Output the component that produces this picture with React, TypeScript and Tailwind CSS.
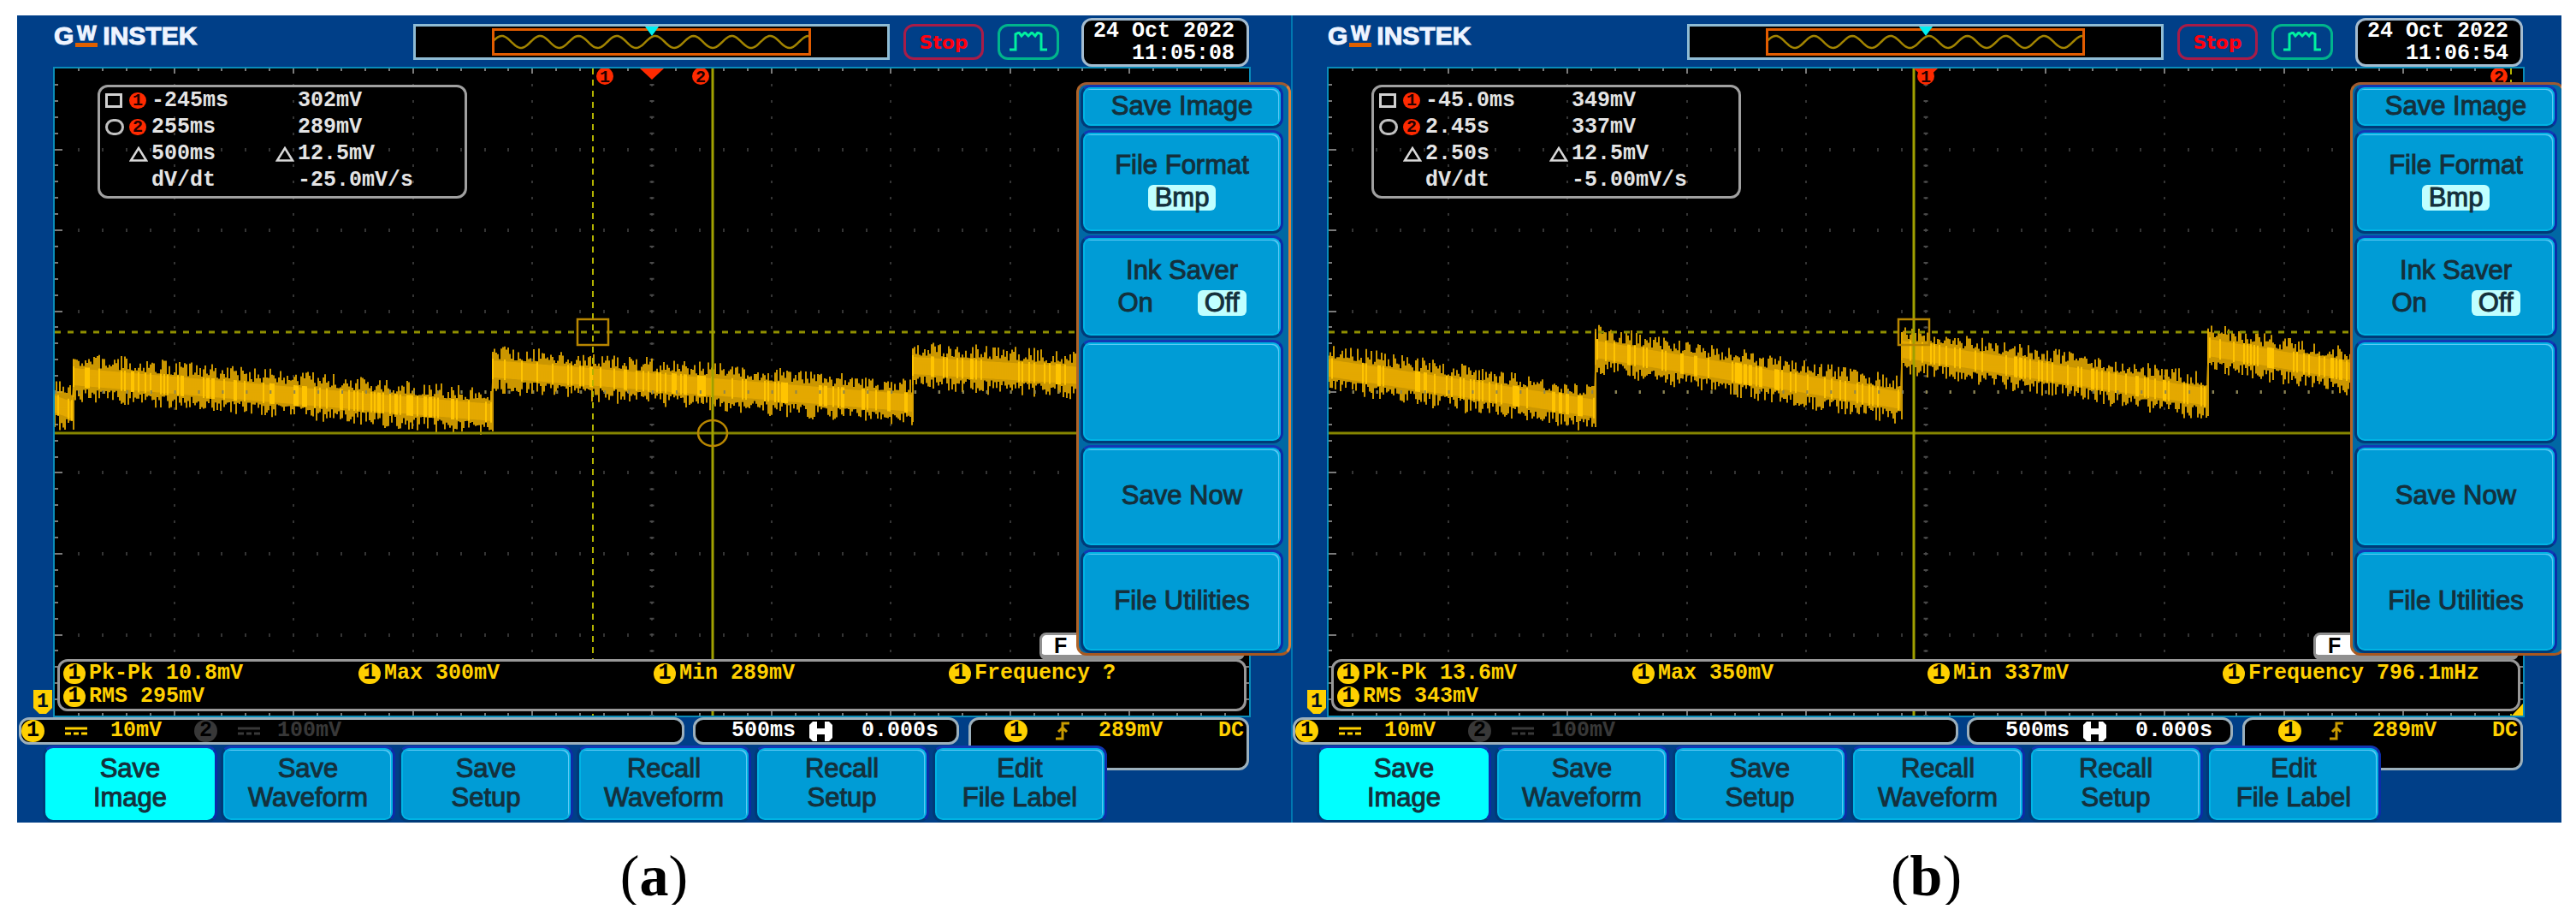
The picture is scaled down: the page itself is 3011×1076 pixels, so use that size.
import React from 'react';
import clsx from 'clsx';

interface Point {
  x: number;
  y: number;
}

interface Cursor {
  x: number;
  dashed: boolean;
}

interface Capture {
  label: string;
  time: string;
  cursorRows: [string, string][];
  slope: [string, string];
  measurements: string[];
  segments: [Point, Point][];
  cursors: [Cursor, Cursor];
  badges: [number, number];
  showCircle: boolean;
  seed: number;
}

const WIDTH = 1396;
const HEIGHT = 756;
const LEVEL_1 = 308;
const LEVEL_2 = 426;

const captures: Capture[] = [
  {
    label: 'a',
    time: '11:05:08',
    cursorRows: [
      ['-245ms', '302mV'],
      ['255ms', '289mV'],
      ['500ms', '12.5mV'],
    ],
    slope: ['dV/dt', '-25.0mV/s'],
    measurements: ['Pk-Pk 10.8mV', 'Max 300mV', 'Min 289mV', 'Frequency ?', 'RMS 295mV'],
    segments: [
      [{ x: 0, y: 392 }, { x: 22, y: 400 }],
      [{ x: 22, y: 360 }, { x: 512, y: 402 }],
      [{ x: 512, y: 351 }, { x: 1003, y: 391 }],
      [{ x: 1003, y: 347 }, { x: 1220, y: 360 }],
    ],
    cursors: [{ x: 629, dashed: true }, { x: 769, dashed: false }],
    badges: [643, 755],
    showCircle: true,
    seed: 7,
  },
  {
    label: 'b',
    time: '11:06:54',
    cursorRows: [
      ['-45.0ms', '349mV'],
      ['2.45s', '337mV'],
      ['2.50s', '12.5mV'],
    ],
    slope: ['dV/dt', '-5.00mV/s'],
    measurements: ['Pk-Pk 13.6mV', 'Max 350mV', 'Min 337mV', 'Frequency 796.1mHz', 'RMS 343mV'],
    segments: [
      [{ x: 0, y: 350 }, { x: 312, y: 397 }],
      [{ x: 312, y: 328 }, { x: 670, y: 388 }],
      [{ x: 670, y: 328 }, { x: 1028, y: 384 }],
      [{ x: 1028, y: 326 }, { x: 1220, y: 358 }],
    ],
    cursors: [{ x: 684, dashed: false }, { x: 1382, dashed: true }],
    badges: [698, 1368],
    showCircle: false,
    seed: 23,
  },
];

const tabs = [
  ['Save', 'Image'],
  ['Save', 'Waveform'],
  ['Save', 'Setup'],
  ['Recall', 'Waveform'],
  ['Recall', 'Setup'],
  ['Edit', 'File Label'],
];

const mono = "font-['Liberation_Mono',monospace] text-[25px] font-bold whitespace-pre";
const softKey =
  'rounded-xl border-[3px] border-t-[#1238b4] border-r-[#0c2ca8] border-b-[#003a78] border-l-[#003a78] bg-[#009cd6] pb-[2px] shadow-[inset_0_0_0_2px_#00b4e4,inset_-2px_2px_0_1px_#5cc8f4] text-[31px] leading-[34px] text-[#14303c] [-webkit-text-stroke:1px_#14303c]';

// small LCG so the noise is the same on every render
const createRandom = (seed: number) => {
  let state = seed;
  return () => {
    state = (state * 1664525 + 1013904223) % 4294967296;
    return state / 4294967296;
  };
};

const buildTrace = (segments: [Point, Point][], seed: number) => {
  const random = createRandom(seed);
  const top: string[] = [];
  const bottom: string[] = [];
  let spikes = '';
  let gaps = '';
  let edges = '';
  segments.forEach(([from, to], index) => {
    for (let x = from.x; x < to.x; x += 2) {
      const t = (x - from.x) / (to.x - from.x);
      const y = from.y + (to.y - from.y) * t;
      const up = y - 12 - Math.pow(random(), 1.4) * 17;
      const down = y + 12 + Math.pow(random(), 1.4) * 17;
      spikes += `M${x} ${up.toFixed(1)}V${down.toFixed(1)}`;
      if (random() < 0.25) {
        gaps += `M${x} ${(y - 12).toFixed(1)}V${(y + 12).toFixed(1)}`;
      }
      top.push(`${x} ${(y - 10).toFixed(1)}`);
      bottom.unshift(`${x} ${(y + 10).toFixed(1)}`);
    }
    if (index > 0) {
      edges += `M${from.x} ${from.y - 20}V${segments[index - 1][1].y + 22}`;
    }
  });
  return { spikes, gaps, edges, band: `M${top.join('L')}L${bottom.join('L')}Z` };
};

const buildGrid = () => {
  let dots = '';
  let ticks = '';
  const dx = WIDTH / 50;
  const dy = HEIGHT / 40;
  for (let i = 1; i < 50; i++) {
    const x = Math.round(i * dx);
    for (let row = 1; row < 8; row++) {
      dots += `M${x} ${Math.round(row * 5 * dy) - 2}v4`;
    }
    const length = i % 5 === 0 ? 6 : 3;
    ticks += `M${x} 0v${length}M${x} ${HEIGHT}v-${length}`;
  }
  for (let j = 1; j < 40; j++) {
    const y = Math.round(j * dy);
    for (let col = 1; col < 10; col++) {
      dots += `M${Math.round(col * 5 * dx)} ${y - 1}v3`;
    }
    const length = j % 5 === 0 ? 9 : 4;
    ticks += `M0 ${y}h${length}M${WIDTH} ${y}h-${length}`;
  }
  return { dots, ticks };
};

const grid = buildGrid();

const Badge: React.FC<{ value: string; className: string }> = ({ value, className }) => (
  <span className={clsx('inline-flex shrink-0 items-center justify-center rounded-full', className)}>{value}</span>
);

const Display: React.FC<{ capture: Capture }> = ({ capture }) => {
  const trace = buildTrace(capture.segments, capture.seed);
  const [first, second] = capture.cursors;
  return (
    <svg viewBox={`0 0 ${WIDTH} ${HEIGHT}`} preserveAspectRatio="none" className="absolute inset-0 h-full w-full">
      <path d={grid.dots} stroke="#343434" strokeWidth="2" />
      <path d={grid.ticks} stroke="#7a7a7a" strokeWidth="2" />
      <path d="M698 18V756" stroke="#4a4a4a" strokeWidth="5" strokeDasharray="2 16.9" />
      <path d={trace.band} fill="#eeb000" />
      <path d={trace.edges} stroke="#c89400" strokeWidth="2" />
      <path d={trace.spikes} stroke="#e2a800" strokeWidth="1.8" />
      <path d={trace.gaps} stroke="#ffc400" strokeWidth="2" />
      <path d="M0 378H1396" stroke="#8c8450" strokeWidth="4" strokeDasharray="2 25.92" />
      <path d={`M0 ${LEVEL_1}H${WIDTH}`} stroke="#8f8f00" strokeWidth="3" strokeDasharray="7 8" />
      <path d={`M0 ${LEVEL_2}H${WIDTH}`} stroke="#858500" strokeWidth="3" />
      {[first, second].map((cursor) => (
        <path
          key={cursor.x}
          d={`M${cursor.x} 0V${HEIGHT}`}
          stroke={cursor.dashed ? '#b4b400' : '#a0a000'}
          strokeWidth={cursor.dashed ? 2 : 3}
          strokeDasharray={cursor.dashed ? '7 6' : undefined}
        />
      ))}
      <rect x={first.x - 18} y={LEVEL_1 - 15} width="36" height="30" fill="none" stroke="#b88600" strokeWidth="2.5" />
      {capture.showCircle && (
        <ellipse cx={second.x} cy={LEVEL_2} rx="17" ry="15" fill="none" stroke="#b88600" strokeWidth="2.5" />
      )}
      <path d="M684 0H712L698 13Z" fill="#ff2a00" />
      {capture.badges.map((x, index) => (
        <g key={x}>
          <ellipse cx={x} cy="9" rx="10" ry="10" fill="#ff2a00" />
          <text
            x={x}
            y="16"
            textAnchor="middle"
            fontFamily="Liberation Mono, monospace"
            fontWeight="bold"
            fontSize="20"
            fill="#200"
          >
            {index + 1}
          </text>
        </g>
      ))}
      {!capture.showCircle && <path d="M1396 742V756H1383Z" fill="#ffd000" />}
    </svg>
  );
};

const Overview: React.FC = () => {
  let wave = 'M0 14';
  for (let x = 0; x <= 366; x += 2) {
    wave += `L${x} ${(17 + 7 * Math.sin(((x + 25) / 44.7) * Math.PI * 2)).toFixed(1)}`;
  }
  return (
    <div className="relative h-[42px] w-[557px] border-[3px] border-[#8fbcd4] bg-black px-[89px] py-[2px]">
      <div className="h-full border-[3px] border-[#e25c00]">
        <svg viewBox="0 0 366 26" preserveAspectRatio="none" className="h-full w-full">
          <path d={wave} transform="translate(0 -4)" fill="none" stroke="#a28400" strokeWidth="2.5" />
        </svg>
      </div>
      <svg viewBox="0 0 16 11" className="absolute top-0 left-[268px] w-4">
        <path d="M0 0H16L8 11Z" fill="#00f0f0" />
      </svg>
    </div>
  );
};

const Header: React.FC<{ time: string }> = ({ time }) => (
  <header className="flex h-[60px] items-start pt-[3px] pr-[49px] pl-[43px]">
    <div className="mt-[5px] flex flex-1 items-start gap-[2px] text-[30px] leading-[32px] font-bold text-[#eef4ff] [-webkit-text-stroke:1px_#eef4ff]">
      <span>G</span>
      <span className="mt-[3px] flex w-[26px] flex-col items-center border-b-[5px] border-[#e06000] pb-[2px] text-[24px] leading-[19px]">
        W
      </span>
      <span className="ml-1">INSTEK</span>
    </div>
    <div className="mt-[7px] flex items-start">
      <Overview />
      <div className="ml-4 flex h-[42px] w-[94px] items-center justify-center rounded-xl border-[3px] border-[#a81c48] font-['DejaVu_Sans',sans-serif] text-[22px] font-bold text-[#ff0010]">
        Stop
      </div>
      <div className="ml-4 flex h-[42px] w-[72px] items-center justify-center rounded-xl border-[3px] border-[#00b48c]">
        <svg viewBox="0 0 44 24" className="h-6 w-11" fill="none" stroke="#00f0a0" strokeWidth="3">
          <path d="M0 21H7V3L11 1L14 5L18 1L22 5L26 1L30 5L33 1L37 3V21H44" />
        </svg>
      </div>
    </div>
    <div
      className={clsx(
        mono,
        'ml-[26px] h-[57px] w-[196px] rounded-xl border-[3px] border-[#a4bcd0] bg-black pr-[14px] text-right leading-[26px] text-white'
      )}
    >
      <div>24 Oct 2022</div>
      <div>{time}</div>
    </div>
  </header>
);

const Triangle: React.FC = () => (
  <svg viewBox="0 0 22 18" className="h-[18px] w-[22px]" fill="none" stroke="#d8d8d8" strokeWidth="2.5">
    <path d="M2 16.500L11 2L20 16.500Z" />
  </svg>
);

const CursorBox: React.FC<{ capture: Capture }> = ({ capture }) => {
  const redBadge = 'h-[19px] w-5 bg-[#ff2a00] text-[20px] leading-[19px] text-[#200]';
  const markers = [
    <span className="h-[17px] w-5 border-[3px] border-[#d0d0d0]" />,
    <span className="h-[19px] w-[22px] rounded-full border-[3px] border-[#c0c0c0]" />,
    null,
  ];
  return (
    <div
      className={clsx(
        mono,
        'relative mt-[19px] ml-[50px] w-[432px] rounded-xl border-[3px] border-[#a0a0a0] pb-[3px] pl-[6px] leading-[31px] text-[#e4e4e4]'
      )}
    >
      {capture.cursorRows.map(([time, volts], index) => (
        <div key={index} className="grid grid-cols-[28px_26px_145px_26px_auto] items-center">
          <span className="flex">{markers[index]}</span>
          {index < 2 ? <Badge value={String(index + 1)} className={redBadge} /> : <Triangle />}
          <span>{time}</span>
          <span>{index === 2 && <Triangle />}</span>
          <span>{volts}</span>
        </div>
      ))}
      <div className="grid grid-cols-[171px_auto] pl-[54px]">
        <span>{capture.slope[0]}</span>
        <span>{capture.slope[1]}</span>
      </div>
    </div>
  );
};

const Measurements: React.FC<{ items: string[] }> = ({ items }) => (
  <div
    className={clsx(
      mono,
      'relative mx-[3px] mt-auto mb-[5px] grid grid-cols-4 rounded-xl border-[3px] border-[#989898] bg-black pb-px pl-1 leading-[27px] text-[#ffd000]'
    )}
  >
    {items.map((item) => (
      <div key={item} className="flex items-center gap-1">
        <Badge value="1" className="h-6 w-[26px] bg-[#ffd000] leading-6 text-black" />
        <span>{item}</span>
      </div>
    ))}
  </div>
);

const SideMenu: React.FC = () => {
  const pill = 'rounded-md bg-[#c0ffff] px-2 leading-[30px]';
  return (
    <nav className="absolute top-[18px] right-0 flex h-[670px] w-[251px] flex-col gap-[2px] rounded-xl border-[3px] border-t-[#a05a30] border-r-[#e08038] border-b-[#a85820] border-l-[#b06428] bg-[#0068a4] pr-[6px] pl-[2px]">
      <h2 className={clsx(softKey, 'flex h-[51px] shrink-0 items-center justify-center')}>Save Image</h2>
      <button className={clsx(softKey, 'flex flex-1 flex-col items-center justify-center gap-[6px]')}>
        <span>File Format</span>
        <span className={pill}>Bmp</span>
      </button>
      <button className={clsx(softKey, 'flex flex-1 flex-col items-center justify-center gap-[6px]')}>
        <span>Ink Saver</span>
        <span className="flex w-[150px] justify-between leading-[30px]">
          <span>On</span>
          <span className={pill}>Off</span>
        </span>
      </button>
      <button aria-label="Empty" className={clsx(softKey, 'flex-1')} />
      <button className={clsx(softKey, 'flex-1')}>Save Now</button>
      <button className={clsx(softKey, 'flex-1')}>File Utilities</button>
    </nav>
  );
};

const Coupling: React.FC = () => (
  <svg viewBox="0 0 26 10" className="h-[10px] w-[26px]" stroke="currentColor" strokeWidth="3">
    <path d="M0 2H26M0 8H7M10 8H16M19 8H26" />
  </svg>
);

const StatusBar: React.FC = () => {
  const box = 'flex items-center rounded-xl border-[3px] border-[#9cb0bc] bg-black';
  return (
    <div className={clsx(mono, 'flex h-[33px] items-start pr-[49px] pl-[2px] leading-[26px] text-[#ffd000]')}>
      <div className={clsx(box, 'h-8 flex-1')}>
        <Badge value="1" className="h-[26px] w-[27px] bg-[#ffd000] text-black" />
        <span className="ml-[24px]">
          <Coupling />
        </span>
        <span className="ml-[27px]">10mV</span>
        <span className="flex items-center text-[#383838]">
          <Badge value="2" className="ml-[38px] h-[26px] w-[27px] bg-[#383838] text-black" />
          <span className="ml-[24px]">
            <Coupling />
          </span>
          <span className="ml-[20px]">100mV</span>
        </span>
      </div>
      <div className={clsx(box, 'ml-[10px] h-8 w-[311px] pl-[42px] text-white')}>
        <span>500ms</span>
        <svg viewBox="0 0 27 23" className="ml-[16px] h-[23px] w-[27px]">
          <path d="M4 0H23L27 4V19L23 23H4L0 19V4Z" fill="#ffffff" />
          <path d="M9 0V8H18V0M9 23V15H18V23" fill="#000000" />
        </svg>
        <span className="ml-[34px]">0.000s</span>
      </div>
      <div className={clsx(box, 'ml-[11px] h-[62px] w-[328px] items-start pr-[3px] pl-[39px]')}>
        <Badge value="1" className="h-[26px] w-[27px] bg-[#ffd000] text-black" />
        <svg viewBox="0 0 16 22" className="mt-[2px] ml-[33px] h-[22px] w-4" fill="none" stroke="#c89a00" strokeWidth="3">
          <path d="M0 20H8V2H16M3 12L8 7L13 12" />
        </svg>
        <span className="ml-[34px]">289mV</span>
        <span className="ml-auto">DC</span>
      </div>
    </div>
  );
};

const Scope: React.FC<{ capture: Capture }> = ({ capture }) => (
  <div className="bg-[#003f88]">
    <Header time={capture.time} />
    <div className="relative pr-[47px] pl-[42px]">
      <div className="relative flex aspect-[1400/760] flex-col border-2 border-[#0a8cb8] bg-black">
        <Display capture={capture} />
        <CursorBox capture={capture} />
        <Measurements items={capture.measurements} />
        <div className="absolute right-[5px] bottom-[65px] h-8 w-[240px] rounded-lg border-[3px] border-b-[6px] border-[#909090] bg-white pl-[14px] text-[25px] leading-[25px] font-bold text-black">
          F
        </div>
      </div>
      <svg viewBox="0 0 22 28" className="absolute bottom-1 left-[19px] h-7 w-[22px]">
        <path d="M0 0H22V21L15 28H7L0 21Z" fill="#ffd000" />
        <text
          x="11"
          y="20"
          textAnchor="middle"
          fontFamily="Liberation Mono, monospace"
          fontWeight="bold"
          fontSize="23"
          fill="#001020"
        >
          1
        </text>
      </svg>
      <SideMenu />
    </div>
    <StatusBar />
    <div className="relative grid h-[90px] grid-cols-6 gap-1 pr-[215px] pl-[30px]">
      {tabs.map(([top, bottom], index) => (
        <button key={index} className={clsx(softKey, index === 0 && 'bg-[#00ffff]! shadow-none!')}>
          <span className="block">{top}</span>
          <span className="block">{bottom}</span>
        </button>
      ))}
    </div>
  </div>
);

const App: React.FC = () => {
  return (
    <main className="grid grid-cols-[1489fr_1485fr] bg-white pt-[18px] pr-[17px] pl-5 font-['Liberation_Sans',sans-serif]">
      {captures.map((capture, index) => (
        <figure key={capture.label}>
          <div className={clsx('relative overflow-hidden', index > 0 && 'border-l-2 border-[#0078b0]')}>
            <div className={clsx(index > 0 && '-mr-1 -ml-[2px]')}>
              <Scope capture={capture} />
            </div>
          </div>
          <figcaption className="mt-[28px] text-center font-['Liberation_Serif',serif] text-[68px] leading-[68px] text-black">
            (<b>{capture.label}</b>)
          </figcaption>
        </figure>
      ))}
    </main>
  );
};

export default App;
